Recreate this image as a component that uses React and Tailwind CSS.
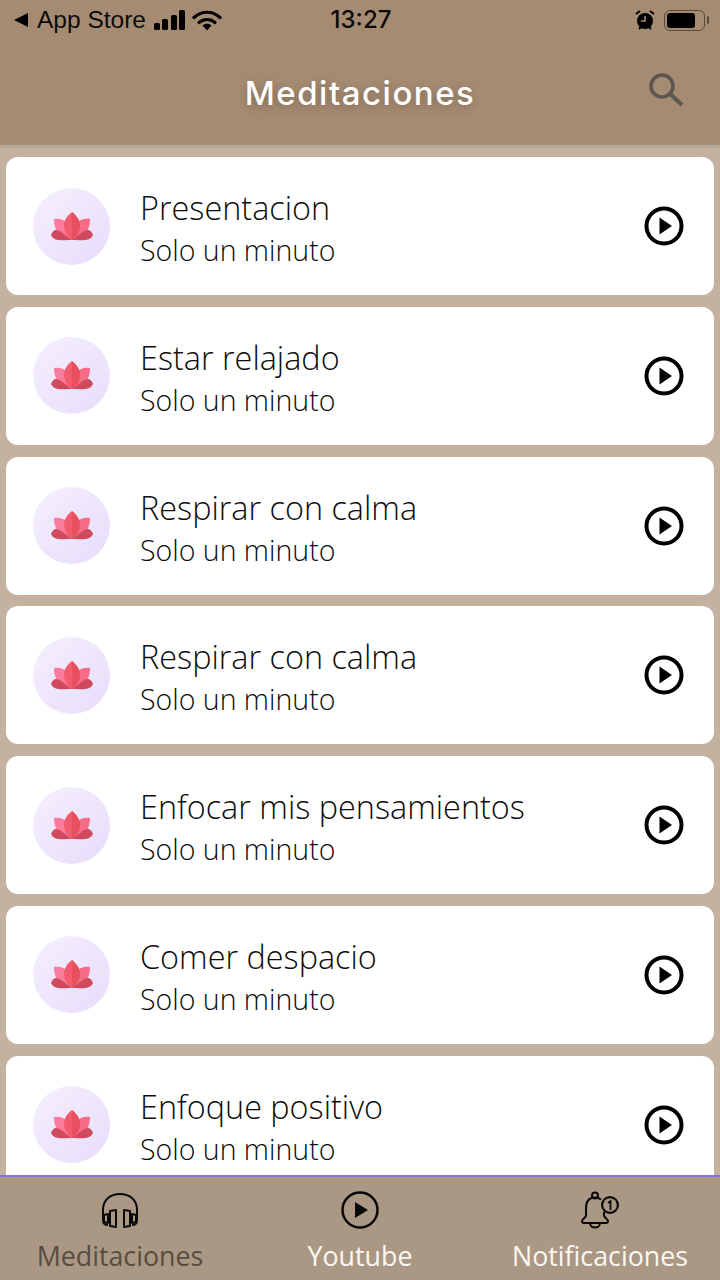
import React from 'react';

const items = [
  'Presentacion',
  'Estar relajado',
  'Respirar con calma',
  'Respirar con calma',
  'Enfocar mis pensamientos',
  'Comer despacio',
  'Enfoque positivo',
];

function Lotus() {
  return (
    <svg width="42" height="29" viewBox="0 0 42 29">
      <path d="M3 7c6-1 11 1 14 5l4 16C13 27 3 22 3 7z" fill="#fb7b9c" />
      <path d="M39 7c-6-1-11 1-14 5l-4 16c8-1 18-6 18-21z" fill="#f66c86" />
      <path d="M0 23c1-3 3-5 5-5 4 0 10 6 16 10h-4C9 29 2 28 0 23z" fill="#cf4a5c" />
      <path d="M42 23c-1-3-3-5-5-5-4 0-10 6-16 10h4c8 1 15 0 17-5z" fill="#cf4a5c" />
      <path d="M21 0c-6 5-8 9-8 14s3 10 8 14c5-4 8-9 8-14S27 5 21 0z" fill="#f25a6e" />
      <path d="M21 0c5 5 8 9 8 14s-3 10-8 14z" fill="#e9505f" />
    </svg>
  );
}

function PlayIcon() {
  return (
    <svg width="40" height="40" viewBox="0 0 40 40">
      <circle cx="20" cy="20" r="17.500" fill="none" stroke="#000" strokeWidth="4" />
      <path d="M15.500 11.500v17L28 20z" fill="#000" />
    </svg>
  );
}

function MeditationRow({ title }) {
  return (
    <div className="flex h-[138px] shrink-0 items-center rounded-xl bg-white pl-[27px] pr-[30px]">
      <div className="flex h-[77px] w-[77px] items-center justify-center rounded-full bg-gradient-to-br from-[#f4f0fe] to-[#e8dcfb]">
        <Lotus />
      </div>
      <div className="ml-[30px] flex-1 pt-[5px] font-['Open_Sans',sans-serif] font-light text-[#0d0d0d]">
        <div className="text-[32.400px] leading-[42px]">{title}</div>
        <div className="mt-[1px] text-[28.500px] leading-[42px]">Solo un minuto</div>
      </div>
      <PlayIcon />
    </div>
  );
}

function StatusBar() {
  return (
    <div className="grid h-[40px] grid-cols-3 items-center pl-[13px] pr-[11px] font-['Liberation_Sans',sans-serif] text-[#0b0b0b]">
      <div className="flex items-center">
        <svg width="16" height="16" viewBox="0 0 16 16">
          <path d="M1 8l14-7v14z" fill="#000" />
        </svg>
        <span className="ml-[8px] text-[24.500px] leading-none">App Store</span>
        <svg className="ml-[7px]" width="33" height="22" viewBox="0 0 33 22">
          <rect x="1" y="14" width="6" height="7" rx="1.500" fill="#000" />
          <rect x="9" y="10" width="6" height="11" rx="1.500" fill="#000" />
          <rect x="18" y="6" width="6" height="15" rx="1.500" fill="#000" />
          <rect x="26" y="1" width="6" height="20" rx="1.500" fill="#000" />
        </svg>
        <svg className="ml-[6px]" width="30" height="22" viewBox="0 0 30 22">
          <path d="M2 8.500C9.500 1.500 20.500 1.500 28 8.500" fill="none" stroke="#000" strokeWidth="3.200" strokeLinecap="round" />
          <path d="M7 13.500C11.500 9.500 18.500 9.500 23 13.500" fill="none" stroke="#000" strokeWidth="3.200" strokeLinecap="round" />
          <path d="M10.500 16.500c2.500-2.200 6.500-2.200 9 0L15 21.500z" fill="#000" />
        </svg>
      </div>
      <div className="text-center font-['Inter',sans-serif] text-[24px] font-medium leading-none">13:27</div>
      <div className="flex items-center justify-end">
        <svg width="20" height="22" viewBox="0 0 20 22">
          <circle cx="10" cy="12" r="8" fill="#000" />
          <path d="M1 5l4-3M19 5l-4-3M4 20l2-2M16 20l-2-2" stroke="#000" strokeWidth="2" />
          <path d="M10 7v5H6" fill="none" stroke="#a58b72" strokeWidth="1.500" />
        </svg>
        <div className="ml-[9px] flex h-[21px] w-[41px] items-center rounded-[6px] border-[1.500px] border-[#5d4a36] p-[2px]">
          <div className="h-full w-[28px] rounded-[3px] bg-black" />
        </div>
        <div className="ml-[2px] h-[8px] w-[2px] rounded-r bg-[#5d4a36]" />
      </div>
    </div>
  );
}

export default function App() {
  return (
    <div className="flex h-[1280px] w-[720px] flex-col overflow-hidden bg-[#c4b1a0]">
      <header className="h-[145px] shrink-0 bg-[#a58b72]">
        <StatusBar />
        <div className="relative flex h-[105px] items-center justify-center pt-[2px]">
          <h1 className="font-['Inter',sans-serif] text-[33px] font-medium tracking-[1.500px] text-white [text-shadow:0_3px_8px_rgba(70,50,30,0.35)]">
            Meditaciones
          </h1>
          <svg className="absolute right-[36px] top-[32px]" width="36" height="36" viewBox="0 0 36 36">
            <circle cx="14" cy="14" r="11" fill="none" stroke="#5a5650" strokeWidth="3.500" />
            <path d="M22 22l12 11" stroke="#5a5650" strokeWidth="4" />
          </svg>
        </div>
      </header>
      <div className="h-[3px] shrink-0 bg-[#bcaa99]" />
      <main className="flex min-h-0 flex-1 flex-col gap-[11.800px] overflow-hidden px-[6px] pt-[9px]">
        {items.map((title, i) => (
          <MeditationRow key={i} title={title} />
        ))}
      </main>
      <nav className="grid h-[105px] shrink-0 grid-cols-3 border-t-2 border-[#7b78d2] bg-[#ab9884] font-['Open_Sans',sans-serif] text-[26.800px]">
        <div className="flex flex-col items-center pt-[14px] text-[#574c41]">
          <svg width="38" height="38" viewBox="0 0 38 38" fill="none" stroke="#0a0a0a" strokeWidth="2" strokeLinejoin="round">
            <path d="M2 29V19C2 9 9 3 19 3s17 6 17 16v10" />
            <path d="M2 29c0 3 2 5 5 5" />
            <path d="M36 29c0 3-2 5-5 5" />
            <path d="M3 24l4-1v9l-4-1z" />
            <path d="M35 24l-4-1v9l4-1z" />
            <path d="M9 20l6-1v17l-6-1z" />
            <path d="M29 20l-6-1v17l6-1z" />
          </svg>
          <span className="mt-[9px] leading-[36px]">Meditaciones</span>
        </div>
        <div className="flex flex-col items-center pt-[14px] text-[#fbf7f2]">
          <svg width="38" height="38" viewBox="0 0 38 38">
            <circle cx="19" cy="19" r="17.500" fill="none" stroke="#0a0a0a" strokeWidth="2.500" />
            <path d="M14 11v16l13-8z" fill="#0a0a0a" />
          </svg>
          <span className="mt-[9px] leading-[36px]">Youtube</span>
        </div>
        <div className="flex flex-col items-center pt-[14px] text-[#fbf7f2]">
          <svg width="40" height="39" viewBox="0 0 40 39" fill="none" stroke="#0a0a0a" strokeWidth="2">
            <circle cx="15" cy="4.500" r="3" />
            <path d="M6 25V17C6 10 9 6.500 15 6.500c2.500 0 4.500 .7 6 2" />
            <path d="M24 21v4" />
            <path d="M6 25c-1 2-4 3-4 5 0 1.500 1 2 2 2h22c1 0 2-.5 2-2 0-2-3-3-4-5" strokeLinejoin="round" />
            <path d="M10 32c0 6 10 6 10 0" />
            <circle cx="30" cy="14" r="9" fill="#0a0a0a" stroke="none" />
            <circle cx="30" cy="14" r="6.800" fill="#ab9884" stroke="none" />
            <path d="M28 12l2.500-2v9" strokeWidth="1.800" />
          </svg>
          <span className="mt-[8px] leading-[36px]">Notificaciones</span>
        </div>
      </nav>
    </div>
  );
}
